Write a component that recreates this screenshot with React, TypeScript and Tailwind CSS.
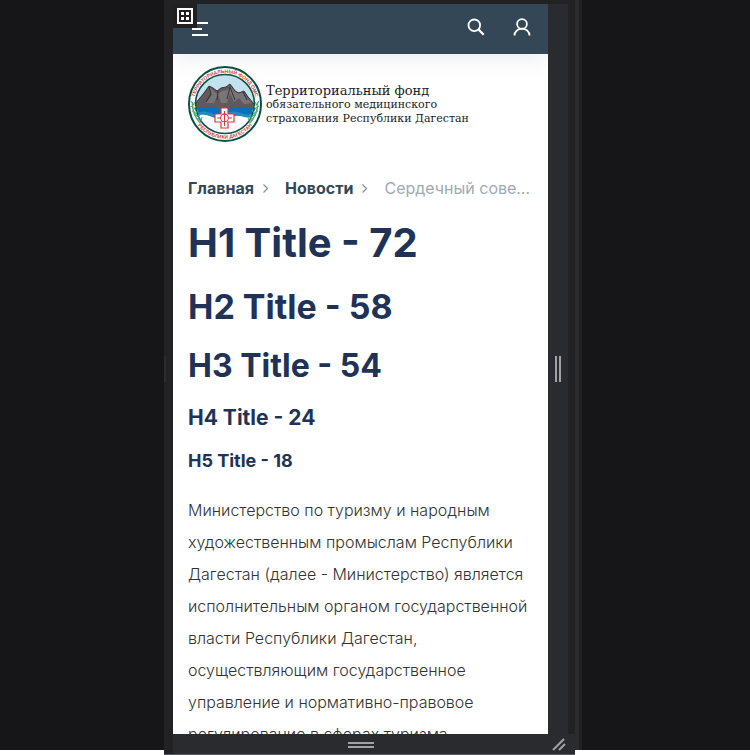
import React from 'react';

const breadcrumbs = ['Главная', 'Новости'];

function GridIcon() {
  return (
    <svg width="16" height="16" viewBox="0 0 16 16" aria-hidden="true">
      <path d="M1 1h14v14H1z" fill="none" stroke="#fff" strokeWidth="2" />
      <path d="M4 4h3v3H4zM9 4h3v3H9zM4 9h3v3H4zM9 9h3v3H9z" fill="#fff" />
    </svg>
  );
}

function SearchIcon() {
  return (
    <svg width="18" height="18" viewBox="0 0 18 18" fill="none" stroke="#fff" strokeWidth="1.8" aria-hidden="true">
      <circle cx="7.3" cy="7.3" r="5.8" />
      <path d="M11.3 11.3 16.7 16.7" strokeWidth="2.2" />
    </svg>
  );
}

function UserIcon() {
  return (
    <svg width="18" height="18" viewBox="0 0 18 18" fill="none" stroke="#fff" strokeWidth="1.8" aria-hidden="true">
      <circle cx="9" cy="6" r="4.9" />
      <path d="M1.5 17.4a7.5 6.8 0 0 1 15 0" />
    </svg>
  );
}

function Emblem() {
  return (
    <svg className="shrink-0" width="74" height="76" viewBox="0 0 74 76" aria-hidden="true">
      <defs>
        <clipPath id="lake"><circle cx="37" cy="38" r="29.5" /></clipPath>
        <path id="topArc" d="M6 38a31 31 0 0 1 62 0" />
        <path id="bottomArc" d="M2.4 38a34.6 34.6 0 0 0 69.2 0" />
      </defs>
      <ellipse cx="37" cy="38" rx="36" ry="37" fill="#fff" stroke="#075142" strokeWidth="2" />
      <g clipPath="url(#lake)">
        <path d="M7 8h60v60H7z" fill="#c4e2ee" />
        <path d="M7 38h60v14H7z" fill="#0871b7" />
        <path d="M7 50q8-3 15 0t16 1 15-1 15 1v20H7z" fill="#f8fcfd" />
        <path d="M7 47q9-3 16 0t15 0 15 0 15 0v3q-7 3-15 0t-15 1-16-1-15 2z" fill="#208bc8" />
        <path d="m7 38 9-11 5-7 4 2 4 3 4-3 5-1 4-3 5 7 4 2 5-2 4 6 7 8v2H7z" fill="#5f5a5d" />
        <path d="m21 21 3 8-6 8h8l4-9 3 9h6l3-10 4 9 5-4 5 6 8-1-6-6-4-5-5 1-5-7-5 4-5 1-5 3z" fill="#797477" />
        <path d="m21 21 2 7-5 8m12-11-1 9m13-13-3 12m3-12 5 13m8-8 4 8" fill="none" stroke="#353336" />
        <path d="m7 38 9-11 5-7 4 2 4 3 4-3 5-1 4-3 5 7 4 2 5-2 4 6 7 8" fill="none" stroke="#353336" />
      </g>
      <circle cx="37" cy="38" r="29.5" fill="none" stroke="#075142" strokeWidth="1.5" />
      <g fill="none" stroke="#4fae7f">
        <path d="M4.300 36c0 9 3 16 8 21M69.700 36c0 9-3 16-8 21" strokeWidth="1.5" />
        <path d="m3 35 3 4m-3 1 4 3m-3 2 4 2m-2 2 4 1m-1 3h4M7 36l-3 5m4-1-3 5m5-1-3 5m5-1-2 5m4-2-1 4M71 35l-3 4m3 1-4 3m3 2-4 2m2 2-4 1m1 3h-4M67 36l3 5m-4-1 3 5m-5-1 3 5m-5-1 2 5m-4-2 1 4" />
      </g>
      <g fill="#d63c44" fontFamily="'Liberation Sans', sans-serif" fontWeight="700" fontSize="5">
        <text textAnchor="middle"><textPath href="#topArc" startOffset="50%">ТЕРРИТОРИАЛЬНЫЙ ФОНД ОМС</textPath></text>
        <text textAnchor="middle"><textPath href="#bottomArc" startOffset="50%">РЕСПУБЛИКИ ДАГЕСТАН</textPath></text>
      </g>
      <path d="M33 42h7v6h6v8h-6v6h-7v-6h-6v-8h6z" fill="#fff" stroke="#df3545" strokeWidth="1.200" />
      <path d="M36.5 45v15M34.500 48h4M29 52h4m7 0h4" fill="none" stroke="#df3545" />
      <circle cx="36.5" cy="52" r="4" fill="none" stroke="#df3545" />
    </svg>
  );
}

function Header() {
  return (
    <header className="flex h-[50px] shrink-0 items-center justify-between bg-[#344756] pr-[17px] pl-[19px] shadow-[0_4px_24px_rgba(0,0,0,0.08)]">
      <button aria-label="Меню" className="flex w-4 flex-col gap-1">
        <span className="h-0.5 w-4 bg-white" />
        <span className="h-0.5 w-[10px] bg-white" />
        <span className="h-0.5 w-4 bg-white" />
      </button>
      <div className="flex gap-7 pb-1">
        <button aria-label="Поиск"><SearchIcon /></button>
        <button aria-label="Личный кабинет"><UserIcon /></button>
      </div>
    </header>
  );
}

function Page() {
  return (
    <div className="flex min-h-0 min-w-0 flex-1 flex-col overflow-hidden bg-white font-['Inter','Noto_Sans',sans-serif]">
      <Header />
      <main className="pt-3 pr-3 pl-[15px]">
        <a href="#home" className="flex items-center gap-1 font-['DejaVu_Serif',serif] text-[11px] leading-[14px] text-[#222]">
          <Emblem />
          <span className="pt-0.5 whitespace-nowrap">
            <span className="block text-[13px]">Территориальный фонд</span>
            <span className="block">обязательного медицинского</span>
            <span className="block">страхования Республики Дагестан</span>
          </span>
        </a>
        <nav aria-label="Навигация" className="mt-[34px] flex items-center text-base leading-6 whitespace-nowrap">
          {breadcrumbs.map((item) => (
            <React.Fragment key={item}>
              <a href="#section" className="font-bold text-[#344756]">{item}</a>
              <svg className="mr-4 ml-2 shrink-0" width="7" height="9" viewBox="0 0 7 9" fill="none" stroke="#82909a" strokeWidth="1.2" aria-hidden="true">
                <path d="m1.5.5 4 4-4 4" />
              </svg>
            </React.Fragment>
          ))}
          <span className="text-[#9eabb3]">Сердечный сове…</span>
        </nav>
        <div className="font-bold text-[#203357]">
          <h1 className="mt-[17px] text-[40px] leading-[52px]">H1 Title - 72</h1>
          <h2 className="mt-4 text-[34px] leading-[44px]">H2 Title - 58</h2>
          <h3 className="mt-4 text-[32px] leading-[42px]">H3 Title - 54</h3>
          <h4 className="mt-4 text-[21px] leading-[30px]">H4 Title - 24</h4>
          <h5 className="mt-4 text-[18px] leading-6">H5 Title - 18</h5>
        </div>
        <p className="mt-[21px] text-base leading-8 font-light text-[#333]">
          Министерство по туризму и народным художественным промыслам Республики Дагестан (далее - Министерство) является исполнительным органом государственной власти Республики Дагестан, осуществляющим государственное управление и нормативно-правовое регулирование в сферах туризма
        </p>
      </main>
    </div>
  );
}

export default function App() {
  return (
    <div className="flex h-screen overflow-hidden bg-white">
      <div className="mb-[5px] flex-[164] bg-[#161618]" />
      <div className="relative flex w-[411px] shrink-0 flex-col border-b border-[#55585d] bg-[#222224] pt-1">
        <div className="flex min-h-0 flex-1">
          <div className="flex w-[9px] shrink-0 items-center">
            <span className="h-[26px] w-0.5 bg-[#2c2d30]" />
          </div>
          <Page />
          <div className="flex w-5 shrink-0 items-center justify-center gap-0.5 bg-[#292b2f]">
            <span className="h-[26px] w-0.5 bg-[#a2a2a3]" />
            <span className="h-[26px] w-0.5 bg-[#a2a2a3]" />
          </div>
          <div className="w-[7px] shrink-0 bg-[#222224]" />
        </div>
        <div className="ml-[9px] flex h-5 items-center bg-[#292b2f]">
          <div className="flex flex-1 flex-col items-center gap-0.5 pt-0.5">
            <span className="h-0.5 w-[26px] bg-[#a2a2a3]" />
            <span className="h-0.5 w-[26px] bg-[#a2a2a3]" />
          </div>
          <div className="flex w-[27px] shrink-0 pl-1">
            <svg width="14" height="14" viewBox="0 0 14 14" stroke="#a2a2a3" strokeWidth="2" aria-hidden="true">
              <path d="M1 13 12 2M7 13l6-6" />
            </svg>
          </div>
        </div>
        <button aria-label="Выбрать область" className="absolute top-1 left-[9px] flex h-6 w-6 items-center justify-center bg-[#202022]">
          <GridIcon />
        </button>
      </div>
      <div className="mb-[5px] flex flex-[175] bg-[#161618]">
        <div className="w-[7px] border-r-[3px] border-[#202022] bg-[#2a2b2d]" />
      </div>
    </div>
  );
}
